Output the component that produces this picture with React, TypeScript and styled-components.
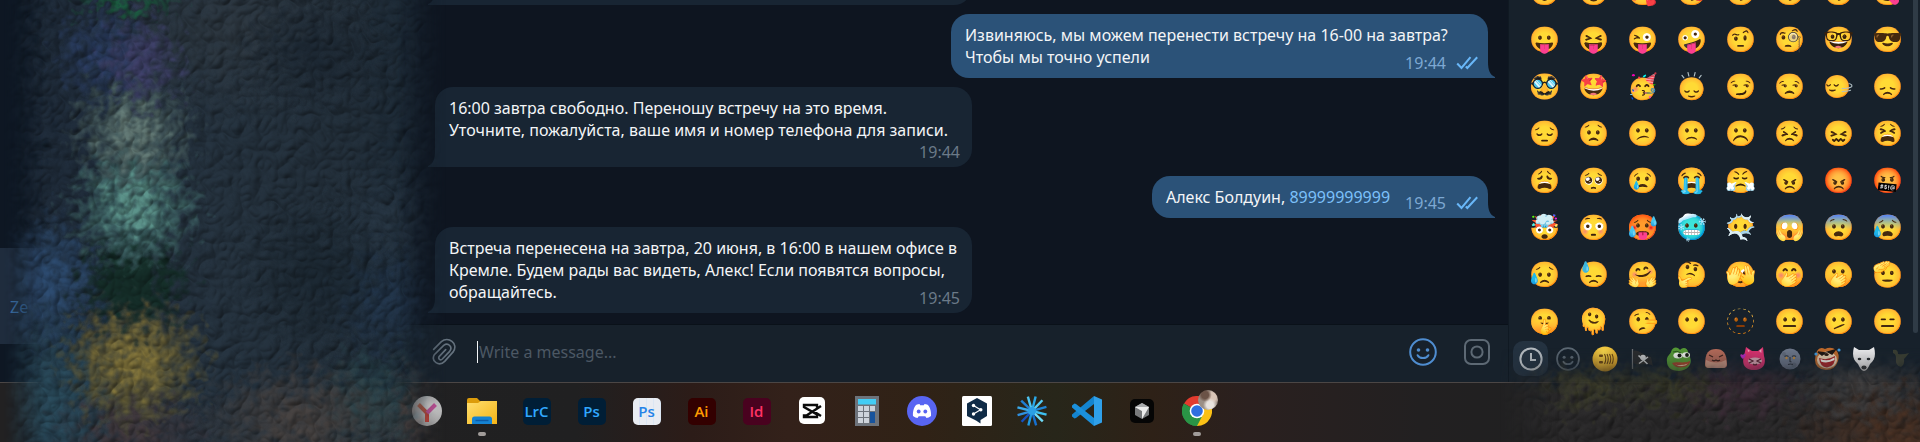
import React from 'react';
import styled, { createGlobalStyle, css } from 'styled-components';

const Global = createGlobalStyle`
  * { box-sizing: border-box; }
  body { margin: 0; background: #0e1621; overflow: hidden; }
  button { border: 0; padding: 0; background: none; color: inherit; font: inherit; }
`;

const Page = styled.div`
  position: relative;
  display: flex;
  flex-direction: column;
  height: 100vh;
  overflow: hidden;
  font-family: 'Noto Sans', 'Open Sans', sans-serif;
  font-size: 16px;
  line-height: 22px;
  color: #f3f5f7;
`;

const Messenger = styled.div`
  flex: 1;
  min-height: 0;
  display: flex;
  background: #0e1520;
`;

/* ---------- chat list ---------- */

const ChatList = styled.aside`
  flex: 0 0 400px;
  display: flex;
  flex-direction: column;
  justify-content: flex-end;
  padding-bottom: 38px;
  background: #0e1723;
`;

const ChatRow = styled.a`
  display: flex;
  align-items: flex-end;
  height: 96px;
  padding: 0 10px 26px;
  background: #1f2c3d;
  color: #3f78b3;
  text-decoration: none;
`;

/* ---------- conversation ---------- */

const Conversation = styled.main`
  flex: 1;
  min-width: 0;
  display: flex;
  flex-direction: column;
`;

const Feed = styled.section`
  flex: 1;
  min-height: 0;
  overflow: hidden;
  display: flex;
  flex-direction: column;
  justify-content: flex-end;
  gap: 9px;
  padding: 0 20px 11px 35px;
`;

const Bubble = styled.article<{ $out?: boolean; $wide?: boolean }>`
  position: relative;
  flex: none;
  display: flow-root;
  align-self: ${p => (p.$out ? 'flex-end' : 'flex-start')};
  width: ${p => (p.$wide ? '537px' : 'auto')};
  max-width: 100%;
  padding: ${p => (p.$out ? '10px 9px 4px 14px' : '10px 12px 4px 14px')};
  border-radius: ${p => (p.$out ? '18px 18px 0 18px' : '18px 18px 18px 0')};
  background: ${p => (p.$out ? '#2b5278' : '#182533')};
`;

const TailSvg = styled.svg<{ $out?: boolean }>`
  position: absolute;
  bottom: 0;
  ${p => (p.$out ? css`left: 100%;` : css`right: 100%; transform: scaleX(-1);`)}
`;

const Meta = styled.span<{ $out?: boolean; $below?: boolean }>`
  float: right;
  display: flex;
  align-items: center;
  gap: 10px;
  margin: ${p => (p.$below ? '0' : '6px')} 0 0 15px;
  color: ${p => (p.$out ? '#7da8d3' : '#6b7a88')};
`;

const Phone = styled.a`
  color: #7cc0fa;
  text-decoration: none;
`;

const Composer = styled.form`
  flex: none;
  display: flex;
  align-items: center;
  height: 58px;
  padding: 0 18px 3px 31px;
  border-top: 1px solid #0a1119;
  background: #17212b;
`;

const IconButton = styled.button`
  flex: none;
  display: grid;
  place-items: center;
  width: 26px;
  height: 30px;
`;

const Caret = styled.span`
  width: 1px;
  height: 22px;
  margin: 0 1px 0 20px;
  background: #f3f5f7;
`;

const MessageInput = styled.input`
  flex: 1;
  min-width: 0;
  padding: 0;
  border: 0;
  outline: 0;
  background: none;
  color: #f3f5f7;
  font: 16px/22px 'Noto Sans', 'Open Sans', sans-serif;
  &::placeholder { color: #4c5864; opacity: 1; }
`;

const ComposerTools = styled.div`
  display: flex;
  gap: 29px;
`;

/* ---------- emoji panel ---------- */

const EmojiPanel = styled.aside`
  flex: 0 0 412px;
  display: flex;
  flex-direction: column;
  border-left: 1px solid #101922;
  background: #17212b;
`;

const EmojiScroller = styled.div`
  flex: 1;
  min-height: 0;
  display: flex;
  overflow: hidden;
`;

const EmojiGrid = styled.div`
  flex: 1;
  align-self: flex-end;
  display: grid;
  grid-template-columns: repeat(8, 49px);
  grid-auto-rows: 47px;
  padding-left: 11px;
  margin-bottom: -8px;
`;

const EmojiButton = styled.button`
  display: grid;
  place-items: center;
  overflow: hidden;
  font-family: 'Noto Color Emoji', sans-serif;
  font-size: 25px;
  line-height: 30px;
  filter: hue-rotate(-6deg);
`;

const ScrollThumb = styled.div`
  width: 5px;
  margin: 0 2px 4px 1px;
  border-radius: 0 0 3px 3px;
  background: #2f3b46;
`;

const PackTabs = styled.nav`
  flex: none;
  display: flex;
  gap: 2px;
  height: 45px;
  padding: 4px 0 6px 4px;
  overflow: hidden;
`;

const PackTab = styled.button<{ $active?: boolean }>`
  flex: 0 0 35px;
  display: grid;
  place-items: center;
  height: 35px;
  border-radius: 10px;
  background: ${p => (p.$active ? '#243240' : 'none')};
`;

/* ---------- taskbar ---------- */

const Taskbar = styled.footer`
  flex: none;
  display: flex;
  height: 60px;
  padding-left: 399px;
  border-top: 1px solid #4b4645;
  background: linear-gradient(90deg, #222122 0, #202021 30%, #2c1c18 36%, #33211a 41%, #302216 48%, #27261a 55%, #2e2117 60%, #2a201f 65%, #222021 74%, #202021 80%, #33271f 100%);
`;

const TaskButton = styled.button`
  flex: 0 0 55px;
  display: flex;
  flex-direction: column;
  align-items: center;
  padding-top: 13px;
`;

const AppSlot = styled.span`
  position: relative;
  display: grid;
  place-items: center;
  width: 30px;
  height: 30px;
`;

const RunningMark = styled.span`
  width: 8px;
  height: 4px;
  margin-top: 6px;
  border-radius: 2px;
  background: #a19c9a;
`;

const AdobeTile = styled.span<{ $bg: string; $fg: string; $grid?: boolean }>`
  display: grid;
  place-items: center;
  width: 28px;
  height: 27px;
  border-radius: 5px;
  color: ${p => p.$fg};
  background: ${p => (p.$grid
    ? 'repeating-linear-gradient(90deg, #e9ecf2 0 6px, #dbe6f3 6px 7px)'
    : p.$bg)};
  font: 600 15px/27px 'Open Sans', 'Noto Sans', sans-serif;
`;

const Avatar = styled.span`
  position: absolute;
  top: -6px;
  right: -6px;
  width: 20px;
  height: 20px;
  border-radius: 50%;
  background:
    radial-gradient(circle at 35% 25%, #6b5347 0 18%, transparent 34%),
    radial-gradient(circle at 60% 75%, #e8e3de 0 18%, transparent 36%),
    radial-gradient(circle at 70% 35%, #d8c4b6 0 22%, transparent 40%),
    #9b8f86;
`;

/* ---------- frosted glass ---------- */

const LeftGlass = styled.div`
  position: absolute;
  inset: 0 auto 0 0;
  width: 446px;
  pointer-events: none;
  overflow: hidden;
  mask-image: linear-gradient(90deg, transparent 4px, rgba(0, 0, 0, .35) 16px, #000 44px, #000 396px, rgba(0, 0, 0, .35) 426px, transparent 446px);
`;

const LeftLights = styled.div`
  position: absolute;
  inset: -30px;
  filter: url(#frost);
  background:
    radial-gradient(ellipse 62px 16px at 157px 28px, #1a5c3f, transparent),
    radial-gradient(ellipse 46px 48px at 172px 92px, #3d3e66 10%, transparent),
    radial-gradient(ellipse 52px 50px at 134px 84px, #27395c 10%, transparent),
    radial-gradient(ellipse 64px 60px at 163px 163px, #5f7571 12%, rgba(76, 98, 97, .7) 48%, transparent),
    radial-gradient(ellipse 68px 66px at 164px 236px, #578b83 14%, rgba(66, 108, 106, .75) 48%, transparent),
    radial-gradient(ellipse 60px 50px at 164px 312px, #142c27 40%, transparent),
    radial-gradient(ellipse 76px 68px at 164px 391px, #7d7039 14%, rgba(104, 95, 52, .8) 42%, transparent),
    radial-gradient(ellipse 60px 70px at 76px 312px, #2b486b 10%, transparent),
    radial-gradient(ellipse 70px 110px at 74px 430px, #284858 10%, transparent),
    radial-gradient(ellipse 90px 50px at 160px 462px, #40373b, transparent),
    radial-gradient(ellipse 110px 60px at 330px 450px, #433f3e 10%, transparent),
    radial-gradient(ellipse 60px 60px at 400px 432px, #254048 10%, transparent),
    radial-gradient(ellipse 50px 60px at 448px 450px, #4c4240, transparent),
    radial-gradient(ellipse 80px 60px at 345px 84px, #1b2631 10%, transparent),
    radial-gradient(ellipse 80px 80px at 350px 306px, #1a2630 10%, transparent),
    radial-gradient(ellipse 60px 60px at 412px 330px, #21344a 10%, transparent),
    radial-gradient(ellipse 60px 60px at 408px 256px, #253340 10%, transparent),
    radial-gradient(ellipse 150px 90px at 260px 60px, #2b353e, transparent),
    linear-gradient(90deg, #0f1a26 40px, #1d2937 76px, #24313d 250px, #212d38 380px, #1b2834 440px, #121c28 476px);
`;

const RightGlass = styled.div`
  position: absolute;
  right: 0;
  bottom: 0;
  width: 420px;
  height: 100px;
  pointer-events: none;
  overflow: hidden;
  mask-image: linear-gradient(180deg, transparent 6px, rgba(0, 0, 0, .3) 22px, rgba(0, 0, 0, .9) 38px, #000 48px), linear-gradient(90deg, transparent 0, #000 60px);
  mask-composite: intersect;
`;

const RightLights = styled.div`
  position: absolute;
  inset: -30px;
  filter: url(#frost);
  background:
    radial-gradient(ellipse 60px 30px at 118px 72px, #3b3b28, transparent),
    radial-gradient(ellipse 60px 28px at 200px 70px, #383926, transparent),
    radial-gradient(ellipse 70px 40px at 268px 72px, #3a2a35, transparent),
    radial-gradient(ellipse 70px 44px at 390px 66px, #424040, transparent),
    radial-gradient(ellipse 120px 60px at 430px 130px, #493022, transparent),
    linear-gradient(180deg, #17212b 40px, #2b2a2b 88px, #282728 130px);
`;

const Defs = styled.svg`
  position: absolute;
  width: 0;
  height: 0;
`;

function FrostFilter() {
  return (
    <Defs aria-hidden="true">
      <filter id="frost" x="0" y="0" width="100%" height="100%" colorInterpolationFilters="sRGB">
        <feTurbulence type="turbulence" baseFrequency="0.055" numOctaves={2} seed={4} result="noise" />
        <feTurbulence type="fractalNoise" baseFrequency="0.1" numOctaves={2} seed={9} result="fine" />
        <feDisplacementMap in="SourceGraphic" in2="fine" scale={72} xChannelSelector="R" yChannelSelector="G" result="bent" />
        <feDiffuseLighting in="noise" surfaceScale={3} diffuseConstant={1} lightingColor="#ffffff" result="light">
          <feDistantLight azimuth={235} elevation={60} />
        </feDiffuseLighting>
        <feComposite in="bent" in2="light" operator="arithmetic" k1={0.75} k2={0.32} k3={0} k4={0} />
      </filter>
    </Defs>
  );
}

/* ---------- small drawings ---------- */

const Tail = ({ out }: { out?: boolean }) => (
  <TailSvg $out={out} width="7" height="16" viewBox="0 0 7 16" aria-hidden="true">
    <path d="M0 0C0 8 2 13 7 15V16H0Z" fill={out ? '#2b5278' : '#182533'} />
  </TailSvg>
);

const Ticks = () => (
  <svg width="23" height="14" viewBox="0 0 23 14" fill="none" stroke="#69b7f8" strokeWidth="2" aria-label="Read">
    <path d="M1.200 7.500 5.500 12 14.500 1.200M9.800 10.600 11.300 12 21.200 1.200" />
  </svg>
);

const Clip = () => (
  <svg width="25" height="28" viewBox="96 60 75 84" fill="none" stroke="#65727e" strokeWidth="5" strokeLinecap="round">
    <path d="M101 94 124 71C145 54 176 76 160 101L134 130C117 147 92 130 103 110L131 82C145 72 159 87 149 100L127 123C121 129 113 122 118 115L137 95" />
  </svg>
);

const Smile = ({ size, color }: { size: number; color: string }) => (
  <svg width={size} height={size} viewBox="0 0 28 28" fill="none" stroke={color} strokeWidth="2" strokeLinecap="round">
    <circle cx="14" cy="14" r="12.8" />
    <path d="M8.6 17.2C10.6 21 17.4 21 19.4 17.2" />
    <g fill={color} stroke="none"><circle cx="9.5" cy="12" r="1.8" /><circle cx="18.5" cy="12" r="1.8" /></g>
  </svg>
);

const Camera = () => (
  <svg width="26" height="26" viewBox="0 0 26 26" fill="none" stroke="#5d6974" strokeWidth="2">
    <rect x="1" y="1" width="24" height="24" rx="6" /><circle cx="13" cy="13" r="5.6" />
  </svg>
);

const Clock = () => (
  <svg width="24" height="24" viewBox="0 0 24 24" fill="none" stroke="#b4babf" strokeWidth="2">
    <circle cx="12" cy="12" r="10.6" /><path d="M12 6V13H17" />
  </svg>
);

const Grin = () => (
  <svg width="26" height="26" viewBox="0 0 26 26">
    <defs><radialGradient id="gold" cx=".45" cy=".25" r=".8"><stop stopColor="#f9d84c" /><stop offset="1" stopColor="#d6961f" /></radialGradient></defs>
    <circle cx="13" cy="13" r="12.5" fill="url(#gold)" />
    <g fill="#6b4512"><rect x="7" y="8.4" width="4" height="2.6" rx="1" /><rect x="7" y="15" width="4" height="2.6" rx="1" /></g>
    <path d="M12.500 8Q15 13 12.500 18M15 8Q17.500 13 15 18M17.500 8Q20 13 17.500 18M20 8Q22.500 13 20 18" fill="none" stroke="#6b4512" strokeWidth="1.1" />
  </svg>
);

const PirateFlag = () => (
  <svg width="22" height="22" viewBox="0 0 22 22">
    <path d="M1.500 1V21" stroke="#6c6f72" strokeWidth="1.300" />
    <path d="M2 3C8 1 10 7 20 9L22 18C14 13 9 19 2 15Z" fill="#2b2c2d" />
    <circle cx="12" cy="9.500" r="2.800" fill="#c7c9ca" />
    <path d="M7.500 7.500 16.500 16M17 9 8 15.500" stroke="#c7c9ca" strokeWidth="1.500" />
  </svg>
);

const Frog = () => (
  <svg width="26" height="26" viewBox="0 0 26 26">
    <path d="M1 16C0 10 4 9 5 6C7 0 12 1 14 4C17 0 23 2 22 8C27 13 26 24 13 25C5 25 1 21 1 16Z" fill="#559a35" />
    <ellipse cx="12" cy="9.500" rx="4.600" ry="3" fill="#f2f4ee" /><ellipse cx="20" cy="9" rx="4" ry="2.800" fill="#f2f4ee" />
    <circle cx="13.500" cy="9.500" r="2" fill="#161c12" /><circle cx="21" cy="9" r="1.900" fill="#161c12" />
    <path d="M6 17C11 15 17 18 24 15C25 21 10 25 6 17Z" fill="#a5432b" /><path d="M9 18.500Q16 20 22 17.500Q18 22 9 18.500Z" fill="#e7c8b0" />
    <path d="M7 6Q11 4 15 7" fill="none" stroke="#2d5c1d" />
  </svg>
);

const Blob = () => (
  <svg width="24" height="22" viewBox="0 0 24 22">
    <path d="M1 17C1 4 5 1 12 1S23 5 23 17Q23 20 19 20H5Q1 20 1 17Z" fill="#b56b59" />
    <path d="M2 12Q0 20 5 20H19Q24 20 22 12Q12 17 2 12Z" fill="#cf9a86" />
    <path d="M5 7 9 9M19 7 15 9M8 12Q10 13.500 12 12Q14 13.500 16 12" fill="none" stroke="#3e211b" strokeWidth="1.300" />
  </svg>
);

const PinkCat = () => (
  <svg width="26" height="26" viewBox="0 0 26 26">
    <path d="M4 10 6 1 12 5H18L23 1 24 10C27 19 22 24 14 24S1 19 4 10Z" fill="#dc3270" />
    <path d="M7.500 3 8 6 10 5ZM21.500 3 21.300 7 19 5Z" fill="#f0a0b8" />
    <ellipse cx="15" cy="15" rx="7" ry="3.400" fill="#d9a7b5" />
    <path d="M9 13 13 15 9 17M21 13 17 15 21 17M13 18Q15 20 17 18" fill="none" stroke="#55202f" strokeWidth="1.200" />
    <path d="M3 13C-1 10 0 7 3 9C5 6 8 9 3 13Z" fill="#b52cc0" />
  </svg>
);

const Moon = () => (
  <svg width="22" height="22" viewBox="0 0 22 22">
    <circle cx="11" cy="11" r="10.500" fill="#6d778a" />
    <circle cx="5" cy="6" r="2" fill="#606a7b" /><circle cx="15" cy="17" r="2.500" fill="#606a7b" />
    <path d="M5.500 8.500Q7.500 7 9.500 8.500M13 8.500Q15 7 17 8.500M11 9V13.500L12.500 14M9 16.500Q11.500 15.500 14 16.500" fill="none" stroke="#2c333e" strokeWidth="1.100" />
    <circle cx="7.500" cy="10" r="1.200" fill="#c28a3c" /><circle cx="15" cy="10" r="1.200" fill="#c28a3c" />
  </svg>
);

const LaughingBear = () => (
  <svg width="28" height="26" viewBox="0 0 28 26">
    <path d="M4 5Q7 0 12 3Q18 0 23 4Q27 8 25 15Q22 24 13 24Q2 23 2 14Q2 9 4 5Z" fill="#c06a2c" />
    <ellipse cx="14" cy="14" rx="10" ry="8.500" fill="#e6cdb0" />
    <path d="M6 12Q14 15 22 10Q23 20 14 21.500Q7 21 6 12Z" fill="#a81f24" />
    <path d="M7.500 13Q15 16 21.500 11.500V14Q14 18 8 15.500Z" fill="#f5f1ea" />
    <path d="M5 6 12 7 9 9ZM22 4 15 6 19 8Z" fill="#1e1512" stroke="#1e1512" strokeWidth="1.500" />
    <ellipse cx="13.500" cy="8.500" rx="2.200" ry="1.500" fill="#2a1a12" />
    <circle cx="3" cy="8" r="1.600" fill="#3f9be0" /><circle cx="26" cy="4" r="1.600" fill="#3f9be0" />
  </svg>
);

const WolfMask = () => (
  <svg width="22" height="26" viewBox="0 0 22 26">
    <path d="M1 1 6 4H16L21 1C23 9 22 14 17 18Q14 25 11 25T5 18C0 14 -1 9 1 1Z" fill="#ececee" />
    <ellipse cx="6.500" cy="13" rx="1.800" ry="1.200" fill="#24282c" /><ellipse cx="15.500" cy="13" rx="1.800" ry="1.200" fill="#24282c" />
    <ellipse cx="11" cy="21.500" rx="2.600" ry="2" fill="#24282c" />
  </svg>
);

const FadedBird = () => (
  <svg width="20" height="20" viewBox="0 0 20 20" opacity=".5">
    <path d="M2 1Q7 0 7 5Q12 6 18 4Q15 8 13 10Q14 15 10 18Q4 17 5 9Q5 5 2 4Z" fill="#5d5c3a" />
  </svg>
);

const YandexIcon = () => (
  <svg width="30" height="30" viewBox="0 0 30 30">
    <defs>
      <radialGradient id="ball" cx=".6" cy=".4" r=".7"><stop stopColor="#ececec" /><stop offset="1" stopColor="#a4a4a5" /></radialGradient>
      <linearGradient id="yred" x1="0" y1="0" x2="1" y2="1"><stop stopColor="#c56a4c" /><stop offset="1" stopColor="#d0372d" /></linearGradient>
    </defs>
    <circle cx="15" cy="15" r="15" fill="url(#ball)" />
    <path d="M6.500 8.500 15 17V26" fill="none" stroke="url(#yred)" strokeWidth="4" />
    <path d="M15 17 23.500 8.500" stroke="#cd52a0" strokeWidth="4" />
  </svg>
);

const FolderIcon = () => (
  <svg width="30" height="30" viewBox="0 0 30 30">
    <defs><linearGradient id="fold" x1="0" y1="0" x2="1" y2="1"><stop stopColor="#ffdf70" /><stop offset="1" stopColor="#f5b416" /></linearGradient></defs>
    <path d="M0 4Q0 2 2 2H10L13 5H28Q30 5 30 7V12H0Z" fill="#dc9c0b" />
    <path d="M0 7H11L14 5H30V28H0Z" fill="url(#fold)" />
    <path d="M5 28V23Q5 20.500 7.500 20.500H22.500Q25 20.500 25 23V28Z" fill="#1583d3" /><path d="M8.500 24.500H21.500" stroke="#0c5aa6" strokeWidth="1.400" />
  </svg>
);

const CapCutIcon = () => (
  <svg width="28" height="28" viewBox="0 0 28 28">
    <rect x="1" width="26" height="27" rx="5" fill="#fff" />
    <path d="M23 9 8.500 18.500H6V20H19V17.500L6 10V8H19V10.500M23 19 15.500 14.300" fill="none" stroke="#0b0b0b" strokeWidth="2.400" />
  </svg>
);

const CalcIcon = () => (
  <svg width="24" height="30" viewBox="0 0 24 30">
    <rect width="24" height="30" fill="#6d737b" /><rect x="3" y="3" width="18" height="5.500" fill="#43cdf5" />
    <g fill="#cdd3db">
      {[10, 16, 22].map(y => [3, 9, 15].map(x => (
        <rect key={x + '-' + y} x={x} y={y} width="5" height="5" />
      )))}
    </g>
    <rect x="15" y="16" width="5" height="11" fill="#17539c" />
  </svg>
);

const DiscordIcon = () => (
  <svg width="30" height="30" viewBox="0 0 30 30">
    <circle cx="15" cy="15" r="15" fill="#5865f2" />
    <path d="M10 8.500 12.500 8 13.200 9.200H16.800L17.500 8 20 8.500C22.500 9.500 24.500 15 24 20C22.500 21.200 20.500 22 19.500 22L18.300 20.200H11.700L10.500 22C9.500 22 7.500 21.200 6 20C5.500 15 7.500 9.500 10 8.500Z" fill="#fff" />
    <ellipse cx="11.700" cy="15.500" rx="1.900" ry="2.100" fill="#5865f2" /><ellipse cx="18.300" cy="15.500" rx="1.900" ry="2.100" fill="#5865f2" />
  </svg>
);

const DeepLIcon = () => (
  <svg width="30" height="30" viewBox="0 0 30 30">
    <rect width="30" height="30" rx="1.500" fill="#fff" />
    <path d="M15 2 25 7.500V20L18.500 24V27.500L14 24.500 5 20V7.500Z" fill="#0f2b46" />
    <path d="M11.500 9.500 18.500 13.700 11.500 18" fill="none" stroke="#fff" strokeWidth="1.200" />
    <g fill="#fff"><circle cx="11.500" cy="9.500" r="1.700" /><circle cx="18.800" cy="13.700" r="1.700" /><circle cx="11.500" cy="18" r="1.700" /></g>
  </svg>
);

const BurstIcon = () => (
  <svg width="30" height="30" viewBox="0 0 30 30" strokeWidth="2.400">
    {['#2aa8e8', '#56cdf6', '#1f86d8', '#3ec0f0', '#6fdcf9', '#1670d0', '#1f9ae2', '#1450c0', '#2f8fe0', '#3aa9ea', '#1f7fd4', '#4ec6f3'].map((c, i) => (
      <path key={i} d="M15 13V0" stroke={c} transform={`rotate(${i * 30 + 14} 15 15)`} />
    ))}
    <circle cx="15" cy="15" r="4" fill="#2b9fe4" />
  </svg>
);

const VsCodeIcon = () => (
  <svg width="30" height="30" viewBox="0 0 30 30">
    <path d="M22 0 30 3.500V26.500L22 30Z" fill="#2fa0ea" />
    <path d="M22 0 0 18.500V20.500L2.500 22.500 4 22 22 8Z" fill="#1484cf" />
    <path d="M22 30 0 11.500V9.500L2.500 7.500 4 8 22 22Z" fill="#1b90dc" />
  </svg>
);

const CursorIcon = () => (
  <svg width="24" height="24" viewBox="0 0 24 24">
    <rect width="24" height="24" rx="5" fill="#050505" />
    <path d="M12 4 19 8V16L12 20 5 16V8Z" fill="#77797b" />
    <path d="M12 4 19 8 12 12 5 8Z" fill="#a9abad" /><path d="M5 8 19 8 12 20V12Z" fill="#ececec" />
  </svg>
);

const ChromeIcon = () => (
  <svg width="30" height="30" viewBox="0 0 30 30">
    <path d="M15 15 2 7.500A15 15 0 0 1 28 7.500Z" fill="#e33b2e" />
    <path d="M15 15 28 7.500A15 15 0 0 1 15 30Z" fill="#fbc116" />
    <path d="M15 15V30A15 15 0 0 1 2 7.500Z" fill="#2a9446" />
    <path d="M15 8H28.300L21 18.500 15 30Z" fill="#fbc116" /><path d="M2 7.500 9 18.500 15 22 21 18.500 15 30A15 15 0 0 1 2 7.500Z" fill="#2a9446" />
    <circle cx="15" cy="15" r="7.300" fill="#fff" /><circle cx="15" cy="15" r="5.800" fill="#2f6fe0" />
  </svg>
);

/* ---------- data ---------- */

const EMOJI = [
  '😌', '😍', '🥰', '😘', '😗', '😙', '😚', '😋',
  '😛', '😝', '😜', '🤪', '🤨', '🧐', '🤓', '😎',
  '🥸', '🤩', '🥳', '🙂‍↕️', '😏', '😒', '🙂‍↔️', '😞',
  '😔', '😟', '😕', '🙁', '☹️', '😣', '😖', '😫',
  '😩', '🥺', '😢', '😭', '😤', '😠', '😡', '🤬',
  '🤯', '😳', '🥵', '🥶', '😶‍🌫️', '😱', '😨', '😰',
  '😥', '😓', '🤗', '🤔', '🫣', '🤭', '🫢', '🫡',
  '🤫', '🫠', '🤥', '😶', '🫥', '😐', '🫤', '😑',
];

const PACKS: [string, React.ReactNode][] = [
  ['Recent', <Clock />], ['Emoji', <Smile size={24} color="#5c6873" />], ['Grins', <Grin />],
  ['Flags', <PirateFlag />], ['Frog', <Frog />], ['Blob', <Blob />], ['Pink cat', <PinkCat />],
  ['Moon', <Moon />], ['Bear', <LaughingBear />], ['Wolf', <WolfMask />], ['Bird', <FadedBird />],
];

const APPS: { name: string; icon: React.ReactNode; running?: boolean }[] = [
  { name: 'Yandex', icon: <YandexIcon /> },
  { name: 'Explorer', icon: <FolderIcon />, running: true },
  { name: 'Lightroom Classic', icon: <AdobeTile $bg="#001e36" $fg="#31a8ff">LrC</AdobeTile> },
  { name: 'Photoshop', icon: <AdobeTile $bg="#001e36" $fg="#31a8ff">Ps</AdobeTile> },
  { name: 'Photoshop Beta', icon: <AdobeTile $bg="#e9ecf2" $fg="#2583e8" $grid>Ps</AdobeTile> },
  { name: 'Illustrator', icon: <AdobeTile $bg="#330000" $fg="#ff9a00">Ai</AdobeTile> },
  { name: 'InDesign', icon: <AdobeTile $bg="#49021f" $fg="#ff3366">Id</AdobeTile> },
  { name: 'CapCut', icon: <CapCutIcon /> },
  { name: 'Calculator', icon: <CalcIcon /> },
  { name: 'Discord', icon: <DiscordIcon /> },
  { name: 'DeepL', icon: <DeepLIcon /> },
  { name: 'Burst', icon: <BurstIcon /> },
  { name: 'VS Code', icon: <VsCodeIcon /> },
  { name: 'Cursor', icon: <CursorIcon /> },
  { name: 'Chrome', icon: <><ChromeIcon /><Avatar /></>, running: true },
];

export default function App() {
  return (
    <Page>
      <Global />
      <FrostFilter />
      <Messenger>
        <ChatList>
          <ChatRow href="#chat">Ze</ChatRow>
        </ChatList>

        <Conversation>
          <Feed>
            <Bubble $wide><br /><Tail /></Bubble>
            <Bubble $out $wide>
              Извиняюсь, мы можем перенести встречу на 16-00 на завтра?<br />
              Чтобы мы точно успели
              <Meta $out>19:44 <Ticks /></Meta>
              <Tail out />
            </Bubble>
            <Bubble $wide>
              16:00 завтра свободно. Переношу встречу на это время.<br />
              Уточните, пожалуйста, ваше имя и номер телефона для записи.
              <Meta $below>19:44</Meta>
              <Tail />
            </Bubble>
            <Bubble $out>
              Алекс Болдуин, <Phone href="tel:89999999999">89999999999</Phone>
              <Meta $out>19:45 <Ticks /></Meta>
              <Tail out />
            </Bubble>
            <Bubble $wide>
              Встреча перенесена на завтра, 20 июня, в 16:00 в нашем офисе в<br />
              Кремле. Будем рады вас видеть, Алекс! Если появятся вопросы,<br />
              обращайтесь.
              <Meta>19:45</Meta>
              <Tail />
            </Bubble>
          </Feed>

          <Composer>
            <IconButton type="button" aria-label="Attach"><Clip /></IconButton>
            <Caret />
            <MessageInput type="text" aria-label="Message" placeholder="Write a message..." />
            <ComposerTools>
              <IconButton type="button" aria-label="Emoji"><Smile size={28} color="#4f8dd0" /></IconButton>
              <IconButton type="button" aria-label="Record video"><Camera /></IconButton>
            </ComposerTools>
          </Composer>
        </Conversation>

        <EmojiPanel>
          <EmojiScroller>
            <EmojiGrid>
              {EMOJI.map(e => <EmojiButton key={e} type="button">{e}</EmojiButton>)}
            </EmojiGrid>
            <ScrollThumb />
          </EmojiScroller>
          <PackTabs aria-label="Emoji packs">
            {PACKS.map(([name, icon], i) => (
              <PackTab key={name} type="button" aria-label={name} $active={i === 0}>{icon}</PackTab>
            ))}
          </PackTabs>
        </EmojiPanel>
      </Messenger>

      <Taskbar>
        {APPS.map(app => (
          <TaskButton key={app.name} type="button" aria-label={app.name}>
            <AppSlot>{app.icon}</AppSlot>
            {app.running && <RunningMark />}
          </TaskButton>
        ))}
      </Taskbar>

      <LeftGlass><LeftLights /></LeftGlass>
      <RightGlass><RightLights /></RightGlass>
    </Page>
  );
}
